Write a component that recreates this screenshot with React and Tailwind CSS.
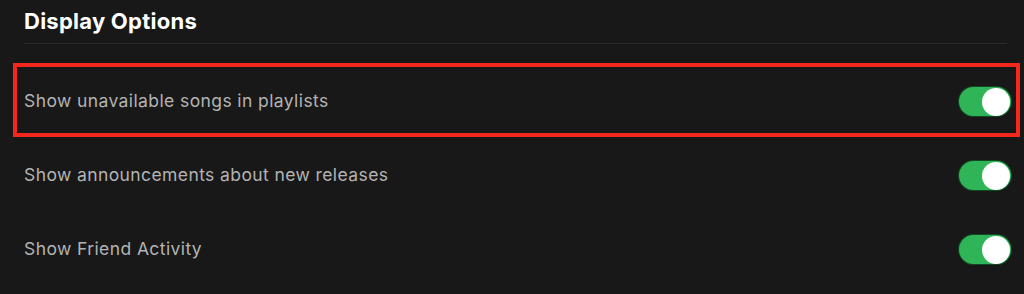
import React, { useState } from 'react';

const rows = [
  { id: 'unavailable', label: 'Show unavailable songs in playlists' },
  { id: 'announcements', label: 'Show announcements about new releases' },
  { id: 'friends', label: 'Show Friend Activity' },
];

const Toggle = ({ on, onChange }) => (
  <button
    type="button"
    onClick={onChange}
    className={`relative h-[31px] w-[54px] rounded-full border border-black/60 ${on ? 'bg-[#2fb457]' : 'bg-[#535353]'}`}
  >
    <span
      className={`absolute top-[1px] h-[28px] w-[28px] rounded-full bg-white ${on ? 'right-[1px]' : 'left-[1px]'}`}
    />
  </button>
);

export default function App() {
  const [state, setState] = useState({ unavailable: true, announcements: true, friends: true });

  return (
    <div className="relative min-h-[294px] w-full bg-[#181818] pl-6 pr-3 font-['Inter',sans-serif]">
      <div className="h-[64px] pt-[6px]">
        <h2 className="text-[22px] font-bold leading-[30px] tracking-[0.25px] text-white">Display Options</h2>
        <div className="mr-[5px] mt-[7px] h-px bg-[#2a2a2a]" />
      </div>

      {rows.map((row) => (
        <div key={row.id} className="flex h-[74px] items-center justify-between">
          <span className="text-[17.5px] tracking-[0.4px] text-[#b3b3b3]">{row.label}</span>
          <Toggle
            on={state[row.id]}
            onChange={() => setState((s) => ({ ...s, [row.id]: !s[row.id] }))}
          />
        </div>
      ))}

      {/* highlight box */}
      <div className="pointer-events-none absolute left-[13px] top-[63px] h-[74px] w-[1007px] border-4 border-[#f5281e]" />
    </div>
  );
}
